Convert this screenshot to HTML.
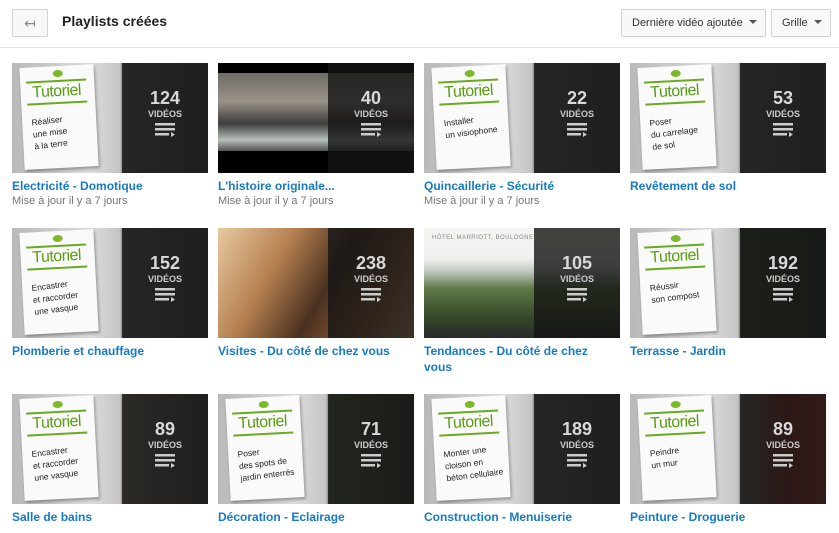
<!DOCTYPE html>
<html><head><meta charset="utf-8"><style>
*{margin:0;padding:0;box-sizing:border-box}
body{width:839px;height:533px;background:#fff;font-family:"Liberation Sans",Arial,sans-serif;position:relative;overflow:hidden}
.btn{position:absolute;top:9px;height:28px;border:1px solid #d3d3d3;background:#f8f8f8;border-radius:2px;font-size:11px;color:#333;line-height:26px;padding:0 10px;white-space:nowrap}
.caret{display:inline-block;width:0;height:0;border-left:4px solid transparent;border-right:4px solid transparent;border-top:4px solid #555;margin-left:6px;vertical-align:2px}
h1{position:absolute;left:62px;top:13px;font-size:14px;font-weight:bold;color:#222}
.hr{position:absolute;left:0;right:0;top:47px;border-top:1px solid #e3e3e3}
.card{position:absolute;width:196px}
.th{position:relative;width:196px;height:110px;overflow:hidden;background:linear-gradient(90deg,#b9b9b9,#dcdcdc 40%,#c4c4c4 55%,#6b6b6b 57%,#4a4a4a)}
.ov{position:absolute;left:110px;top:0;width:86px;height:110px;background:rgba(20,20,20,.8);color:#ddd;text-align:center}
.ov b{display:block;margin-top:25px;font-size:18px;line-height:20px;color:#d8d8d8}
.ov i{display:block;font-style:normal;font-size:9px;font-weight:bold;color:#ccc;margin-top:1px}
.ov svg{margin-top:4px}
.paper{position:absolute;left:10px;top:3px;width:74px;height:102px;background:#fafafa;transform:rotate(-3deg);box-shadow:1px 2px 3px rgba(0,0,0,.35)}
.paper .pin{position:absolute;left:33px;top:4px;width:10px;height:7px;background:#7cba2a;border-radius:50%}
.paper .tut{position:absolute;left:6px;top:14px;width:60px;border-top:2px solid #6aaa20;border-bottom:2px solid #6aaa20;color:#5a9e12;font-size:16px;line-height:20px;text-align:center;letter-spacing:-.5px}
.paper .tx{position:absolute;left:10px;top:48px;font-size:8.5px;line-height:12px;color:#222;transform:rotate(-4deg)}
.t{font-size:12px;font-weight:bold;color:#167ac6;margin-top:5px;line-height:16px}
.s{font-size:11px;color:#767676;line-height:14px}
.back{left:12px;width:36px;padding:0;text-align:center;color:#888;font-size:14px}
</style></head><body>
<div class="btn back">↤</div>
<h1>Playlists créées</h1>
<div class="btn" style="left:621px;width:145px">Dernière vidéo ajoutée<span class="caret"></span></div>
<div class="btn" style="left:771px;width:60px">Grille<span class="caret"></span></div>
<div class="hr"></div>

<div class="card" style="left:12px;top:63px"><div class="th"><div class="paper"><div class="pin"></div><div class="tut">Tutoriel</div><div class="tx">Réaliser<br>une mise<br>à la terre</div></div><div class="ov"><b>124</b><i>VIDÉOS</i><svg width="20" height="14"><rect x="0" y="0" width="20" height="2.5" fill="#ccc"/><rect x="0" y="5" width="20" height="2.5" fill="#ccc"/><rect x="0" y="10" width="14" height="2.5" fill="#ccc"/><path d="M16 9l4 2.5-4 2.5z" fill="#ccc"/></svg></div></div><div class="t">Electricité - Domotique</div><div class="s">Mise à jour il y a 7 jours</div></div>

<div class="card" style="left:218px;top:63px"><div class="th" style="background:linear-gradient(#000 0,#000 10px,#6d6d66 10px,#9a9288 35%,#3c3c3a 55%,#b8c0bc 70%,#505050 88px,#000 88px)"><div class="ov"><b>40</b><i>VIDÉOS</i><svg width="20" height="14"><rect x="0" y="0" width="20" height="2.5" fill="#ccc"/><rect x="0" y="5" width="20" height="2.5" fill="#ccc"/><rect x="0" y="10" width="14" height="2.5" fill="#ccc"/><path d="M16 9l4 2.5-4 2.5z" fill="#ccc"/></svg></div></div><div class="t">L'histoire originale...</div><div class="s">Mise à jour il y a 7 jours</div></div>

<div class="card" style="left:424px;top:63px"><div class="th"><div class="paper"><div class="pin"></div><div class="tut">Tutoriel</div><div class="tx">Installer<br>un visiophone</div></div><div class="ov"><b>22</b><i>VIDÉOS</i><svg width="20" height="14"><rect x="0" y="0" width="20" height="2.5" fill="#ccc"/><rect x="0" y="5" width="20" height="2.5" fill="#ccc"/><rect x="0" y="10" width="14" height="2.5" fill="#ccc"/><path d="M16 9l4 2.5-4 2.5z" fill="#ccc"/></svg></div></div><div class="t">Quincaillerie - Sécurité</div><div class="s">Mise à jour il y a 7 jours</div></div>

<div class="card" style="left:630px;top:63px"><div class="th"><div class="paper"><div class="pin"></div><div class="tut">Tutoriel</div><div class="tx">Poser<br>du carrelage<br>de sol</div></div><div class="ov"><b>53</b><i>VIDÉOS</i><svg width="20" height="14"><rect x="0" y="0" width="20" height="2.5" fill="#ccc"/><rect x="0" y="5" width="20" height="2.5" fill="#ccc"/><rect x="0" y="10" width="14" height="2.5" fill="#ccc"/><path d="M16 9l4 2.5-4 2.5z" fill="#ccc"/></svg></div></div><div class="t">Revêtement de sol</div></div>

<div class="card" style="left:12px;top:228px"><div class="th"><div class="paper"><div class="pin"></div><div class="tut">Tutoriel</div><div class="tx">Encastrer<br>et raccorder<br>une vasque</div></div><div class="ov"><b>152</b><i>VIDÉOS</i><svg width="20" height="14"><rect x="0" y="0" width="20" height="2.5" fill="#ccc"/><rect x="0" y="5" width="20" height="2.5" fill="#ccc"/><rect x="0" y="10" width="14" height="2.5" fill="#ccc"/><path d="M16 9l4 2.5-4 2.5z" fill="#ccc"/></svg></div></div><div class="t">Plomberie et chauffage</div></div>

<div class="card" style="left:218px;top:228px"><div class="th" style="background:linear-gradient(120deg,#e8c9a0,#b58050 30%,#4a3020 55%,#8a5a35 75%,#d8a870)"><div class="ov"><b>238</b><i>VIDÉOS</i><svg width="20" height="14"><rect x="0" y="0" width="20" height="2.5" fill="#ccc"/><rect x="0" y="5" width="20" height="2.5" fill="#ccc"/><rect x="0" y="10" width="14" height="2.5" fill="#ccc"/><path d="M16 9l4 2.5-4 2.5z" fill="#ccc"/></svg></div></div><div class="t">Visites - Du côté de chez vous</div></div>

<div class="card" style="left:424px;top:228px"><div class="th" style="background:linear-gradient(#f4f4f2 0,#f0f0ee 28%,#c8cfc8 38%,#5e7a48 55%,#384a2a 80%,#2a2a2a)"><div style="position:absolute;left:8px;top:7px;font-size:6px;color:#888;letter-spacing:.5px;white-space:nowrap">HÔTEL MARRIOTT, BOULOGNE</div><div class="ov"><b>105</b><i>VIDÉOS</i><svg width="20" height="14"><rect x="0" y="0" width="20" height="2.5" fill="#ccc"/><rect x="0" y="5" width="20" height="2.5" fill="#ccc"/><rect x="0" y="10" width="14" height="2.5" fill="#ccc"/><path d="M16 9l4 2.5-4 2.5z" fill="#ccc"/></svg></div></div><div class="t">Tendances - Du côté de chez<br>vous</div></div>

<div class="card" style="left:630px;top:228px"><div class="th" style="background:linear-gradient(90deg,#b9b9b9,#dcdcdc 40%,#c4c4c4 55%,#3a4a30 57%,#2a3322)"><div class="paper"><div class="pin"></div><div class="tut">Tutoriel</div><div class="tx">Réussir<br>son compost</div></div><div class="ov"><b>192</b><i>VIDÉOS</i><svg width="20" height="14"><rect x="0" y="0" width="20" height="2.5" fill="#ccc"/><rect x="0" y="5" width="20" height="2.5" fill="#ccc"/><rect x="0" y="10" width="14" height="2.5" fill="#ccc"/><path d="M16 9l4 2.5-4 2.5z" fill="#ccc"/></svg></div></div><div class="t">Terrasse - Jardin</div></div>

<div class="card" style="left:12px;top:394px"><div class="th" style="background:linear-gradient(90deg,#b9b9b9,#dcdcdc 40%,#c4c4c4 55%,#8a7e70 57%,#4a4a4a)"><div class="paper"><div class="pin"></div><div class="tut">Tutoriel</div><div class="tx">Encastrer<br>et raccorder<br>une vasque</div></div><div class="ov"><b>89</b><i>VIDÉOS</i><svg width="20" height="14"><rect x="0" y="0" width="20" height="2.5" fill="#ccc"/><rect x="0" y="5" width="20" height="2.5" fill="#ccc"/><rect x="0" y="10" width="14" height="2.5" fill="#ccc"/><path d="M16 9l4 2.5-4 2.5z" fill="#ccc"/></svg></div></div><div class="t">Salle de bains</div></div>

<div class="card" style="left:218px;top:394px"><div class="th" style="background:linear-gradient(90deg,#b9b9b9,#dcdcdc 40%,#c4c4c4 55%,#5a6a40 57%,#3a3a30)"><div class="paper"><div class="pin"></div><div class="tut">Tutoriel</div><div class="tx">Poser<br>des spots de<br>jardin enterrés</div></div><div class="ov"><b>71</b><i>VIDÉOS</i><svg width="20" height="14"><rect x="0" y="0" width="20" height="2.5" fill="#ccc"/><rect x="0" y="5" width="20" height="2.5" fill="#ccc"/><rect x="0" y="10" width="14" height="2.5" fill="#ccc"/><path d="M16 9l4 2.5-4 2.5z" fill="#ccc"/></svg></div></div><div class="t">Décoration - Eclairage</div></div>

<div class="card" style="left:424px;top:394px"><div class="th"><div class="paper"><div class="pin"></div><div class="tut">Tutoriel</div><div class="tx">Monter une<br>cloison en<br>béton cellulaire</div></div><div class="ov"><b>189</b><i>VIDÉOS</i><svg width="20" height="14"><rect x="0" y="0" width="20" height="2.5" fill="#ccc"/><rect x="0" y="5" width="20" height="2.5" fill="#ccc"/><rect x="0" y="10" width="14" height="2.5" fill="#ccc"/><path d="M16 9l4 2.5-4 2.5z" fill="#ccc"/></svg></div></div><div class="t">Construction - Menuiserie</div></div>

<div class="card" style="left:630px;top:394px"><div class="th" style="background:linear-gradient(90deg,#b9b9b9,#dcdcdc 40%,#c4c4c4 55%,#6a6a6a 57%,#8a2a22 80%,#b03a30)"><div class="paper"><div class="pin"></div><div class="tut">Tutoriel</div><div class="tx">Peindre<br>un mur</div></div><div class="ov"><b>89</b><i>VIDÉOS</i><svg width="20" height="14"><rect x="0" y="0" width="20" height="2.5" fill="#ccc"/><rect x="0" y="5" width="20" height="2.5" fill="#ccc"/><rect x="0" y="10" width="14" height="2.5" fill="#ccc"/><path d="M16 9l4 2.5-4 2.5z" fill="#ccc"/></svg></div></div><div class="t">Peinture - Droguerie</div></div>
</body></html>
